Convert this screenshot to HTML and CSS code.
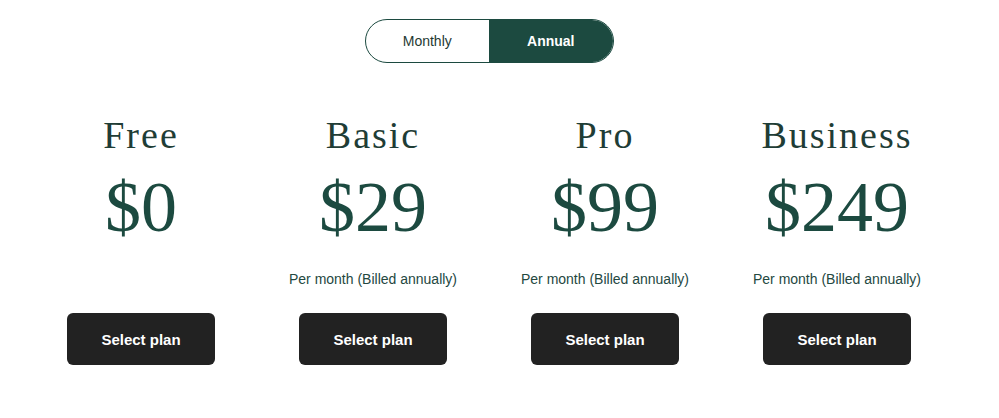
FILE: index.html
```html
<!DOCTYPE html>
<html lang="en">
<head>
    <meta charset="UTF-8">
    <meta name="viewport" content="width=device-width, initial-scale=1.0">
    <title>Pricing</title>

    <link rel="stylesheet" href="styles.css">
</head>
<body>
<div class="content-wrap">
    <div class="toggle">
        <button class="t-btn">Monthly</button>
        <button class="t-btn active">Annual</button>
    </div>

    <div class="plans">
        <div class="plan">
            <h2 class="plan-name">Free</h2>
            <p class="price">$0</p>
            <p class="billing"></p>
            <button class="select-btn">Select plan</button>
        </div>
        <div class="plan">
            <h2 class="plan-name">Basic</h2>
            <p class="price">$29</p>
            <p class="billing">Per month (Billed annually)</p>
            <button class="select-btn">Select plan</button>
        </div>
        <div class="plan">
            <h2 class="plan-name">Pro</h2>
            <p class="price">$99</p>
            <p class="billing">Per month (Billed annually)</p>
            <button class="select-btn">Select plan</button>
        </div>
        <div class="plan">
            <h2 class="plan-name">Business</h2>
            <p class="price">$249</p>
            <p class="billing">Per month (Billed annually)</p>
            <button class="select-btn">Select plan</button>
        </div>
    </div>
</div>
</body>
</html>
```

FILE: styles.css
```css
*{
    box-sizing: border-box;
    font-family: 'Liberation Sans', Arial, sans-serif;
}
body{
    margin: 0;
    background-color: #ffffff;
    color: #1c4a40;
}

.content-wrap{
    width: 928px;
    margin-left: 25px;
    padding-top: 19px;
    display: flex;
    flex-direction: column;
    align-items: center;
}

.toggle{
    display: flex;
    width: 249px;
    height: 44px;
    border: 1px solid #1c4a40;
    border-radius: 22px;
    overflow: hidden;
}

.t-btn{
    flex: 1;
    border: none;
    background-color: transparent;
    color: #1f3a33;
    font-size: 14px;
    cursor: pointer;
}

.t-btn.active{
    background-color: #1c4a40;
    color: #ffffff;
    font-weight: bold;
}

.plans{
    display: grid;
    grid-template-columns: repeat(4, 1fr);
    width: 100%;
    margin-top: 50px;
}

.plan{
    display: flex;
    flex-direction: column;
    align-items: center;
}

.plan-name{
    margin: 0;
    font-family: 'Liberation Serif', 'Times New Roman', serif;
    font-weight: normal;
    font-size: 38px;
    letter-spacing: 2px;
    line-height: 44px;
    color: #1f3d36;
}

.price{
    margin: 8px 0 0;
    font-family: 'Liberation Serif', 'Times New Roman', serif;
    font-size: 72px;
    line-height: 84px;
    color: #1c4a40;
}

.billing{
    margin: 20px 0 0;
    height: 20px;
    font-size: 14px;
    line-height: 20px;
    color: #24483f;
}

.select-btn{
    margin-top: 24px;
    width: 148px;
    height: 52px;
    border: none;
    border-radius: 6px;
    background-color: #222222;
    color: #ffffff;
    font-size: 15px;
    font-weight: bold;
    cursor: pointer;
}
```
